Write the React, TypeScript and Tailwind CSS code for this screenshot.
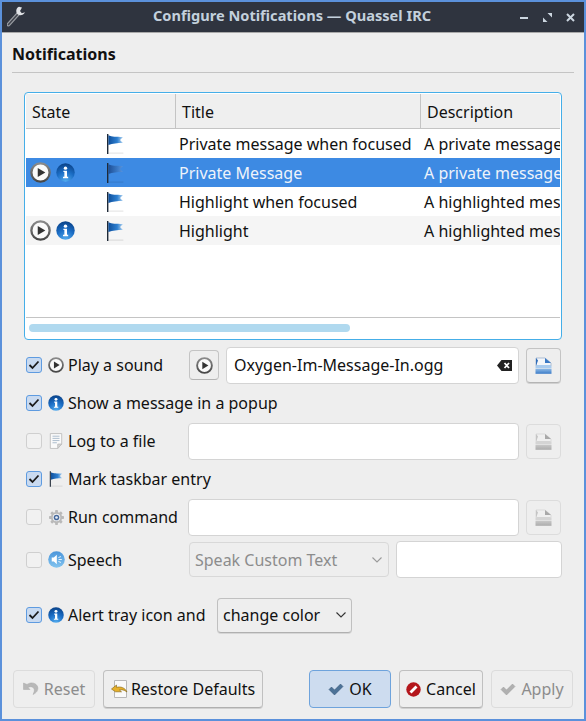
import { type ReactNode } from "react";

function PlayIcon({ size = 18, id }: { size?: number; id: string }) {
  return (
    <svg width={size} height={size} viewBox="0 0 20 20" className="shrink-0">
      <defs>
        <linearGradient id={id} x1="0" y1="0" x2="0" y2="1">
          <stop offset="0" stopColor="#8a8a8a" />
          <stop offset="1" stopColor="#474747" />
        </linearGradient>
      </defs>
      <circle cx="10" cy="10" r="8.7" fill="#fafafa" stroke={`url(#${id})`} strokeWidth="2.2" />
      <path d="M7.4 5.6 14.6 10 7.4 14.4Z" fill="#333" />
    </svg>
  );
}

function InfoIcon({ size = 16, id }: { size?: number; id: string }) {
  return (
    <svg width={size} height={size} viewBox="0 0 20 20" className="shrink-0">
      <defs>
        <radialGradient id={id} cx="0.5" cy="1" r="1">
          <stop offset="0" stopColor="#55aef0" />
          <stop offset="0.55" stopColor="#1a6cc4" />
          <stop offset="1" stopColor="#0a4288" />
        </radialGradient>
      </defs>
      <circle cx="10" cy="10" r="9.7" fill={`url(#${id})`} />
      <circle cx="10" cy="5.4" r="1.8" fill="#fff" />
      <path d="M7.8 8.2h3.8v6.4h1.2V16H7.4v-1.4h1.4V9.6h-1Z" fill="#fff" />
    </svg>
  );
}

function FlagIcon({ id, faded = false, w = 18, h = 20 }: { id: string; faded?: boolean; w?: number; h?: number }) {
  return (
    <svg width={w} height={h} viewBox="0 0 18 20" className="shrink-0">
      <defs>
        <linearGradient id={id} x1="0" y1="0" x2="1" y2="0">
          <stop offset="0" stopColor={faded ? "#1d4f96" : "#0e4f9c"} />
          <stop offset="0.6" stopColor={faded ? "#3a78c4" : "#2d7fd0"} />
          <stop offset="1" stopColor={faded ? "#5a94dc" : "#b9d8f2"} />
        </linearGradient>
      </defs>
      <rect x="1" y="0" width="1.4" height="20" fill="#1f2a38" />
      <path d="M2.4 1.2C6 3 10 2.6 17 3l-3 3 3 3c-6 0-10 .6-14.6 2Z" fill={`url(#${id})`} />
      <rect x="2.4" y="18.6" width="15" height="1" fill="#000" opacity="0.12" />
    </svg>
  );
}

function FileIcon() {
  return (
    <svg width="14" height="16" viewBox="0 0 16 18" className="shrink-0">
      <path d="M1.5.5h13v12l-4.5 5H1.5Z" fill="#fafafa" stroke="#bdbdbd" />
      <path d="M10 17.5v-5h4.5Z" fill="#d5d5d5" stroke="#bdbdbd" />
      <path d="M4 3.5h8M4 6h8M4 8.5h8M4 11h5" stroke="#a3b6c8" />
    </svg>
  );
}

function GearIcon() {
  return (
    <svg width="15" height="15" viewBox="0 0 16 16" className="shrink-0">
      <g fill="#b9b9b9">
        <circle cx="8" cy="8" r="6" />
        <rect x="6.5" y="0" width="3" height="16" rx="0.8" />
        <rect x="0" y="6.5" width="16" height="3" rx="0.8" />
        <rect x="6.5" y="0" width="3" height="16" rx="0.8" transform="rotate(45 8 8)" />
        <rect x="6.5" y="0" width="3" height="16" rx="0.8" transform="rotate(-45 8 8)" />
      </g>
      <circle cx="8" cy="8" r="4" fill="#f4f4f4" />
      <circle cx="8" cy="8" r="3" fill="#46699c" />
      <circle cx="8" cy="8" r="1.4" fill="#e8eef6" />
    </svg>
  );
}

function SpeechIcon() {
  return (
    <svg width="17" height="17" viewBox="0 0 16 16" className="shrink-0">
      <defs>
        <linearGradient id="speechFill" x1="0" y1="0" x2="0" y2="1">
          <stop offset="0" stopColor="#4a95da" />
          <stop offset="1" stopColor="#83c4ef" />
        </linearGradient>
      </defs>
      <circle cx="8" cy="8" r="7.8" fill="url(#speechFill)" />
      <path d="M3.5 6.2h2l2.8-2.6v8.8L5.500 9.800h-2Z" fill="#fff" />
      <path d="M9.8 6.2l2.4-1M10 8h3M9.8 9.8l2.4 1" stroke="#fff" strokeWidth="0.8" />
    </svg>
  );
}

function OpenIcon({ id, disabled = false }: { id: string; disabled?: boolean }) {
  return (
    <svg width="17" height="17" viewBox="0 0 17 17">
      <defs>
        <linearGradient id={id} x1="0" y1="0" x2="0" y2="1">
          <stop offset="0" stopColor={disabled ? "#c8c8c8" : "#8db9e6"} />
          <stop offset="1" stopColor={disabled ? "#acacac" : "#3c7cc8"} />
        </linearGradient>
      </defs>
      <path d="M1 9V1h9l6 5v3Z" fill={disabled ? "#efefef" : "#f4f6f9"} stroke={disabled ? "#cfcfcf" : "#7d9cc0"} strokeWidth="0.6" />
      <path d="M10 1v5h6Z" fill={disabled ? "#a8a8a8" : "#3a78c4"} />
      <path d="M3 3.5 1 1v8Z" fill={disabled ? "#c4c4c4" : "#2f6cb8"} />
      <path d="M.5 9.5 2 8h13l1.500 1.500v1.800H.5Z" fill={disabled ? "#d4d4d4" : "#a9cbee"} />
      <rect x="0.5" y="11.8" width="16" height="5" fill={`url(#${id})`} />
    </svg>
  );
}

function CheckMark({ color = "#4c7297", edge = "#2f4f70" }: { color?: string; edge?: string }) {
  return (
    <svg width="16" height="13" viewBox="0 0 16 13" className="shrink-0">
      <path d="M1 6.5 3.5 4 6.5 7 12.5 1 15 3.5 6.5 12Z" fill={color} stroke={edge} strokeWidth="0.5" />
    </svg>
  );
}

function Checkbox({ checked }: { checked: boolean }) {
  return (
    <span
      className={`flex h-4 w-4 shrink-0 items-center justify-center rounded-[3px] border ${
        checked ? "border-[#5e9be0] bg-[#c9daf0]" : "border-[#cfcfcf] bg-[#f1f1f1]"
      }`}
    >
      {checked && (
        <svg width="12" height="10" viewBox="0 0 12 10">
          <path d="M1.5 5 4.5 8 10.5 1.5" fill="none" stroke="#1c1c1c" strokeWidth="1.8" />
        </svg>
      )}
    </span>
  );
}

function Option({ checked, icon, label, width }: { checked: boolean; icon: ReactNode; label: string; width: string }) {
  return (
    <div className={`flex shrink-0 items-center ${width}`}>
      <Checkbox checked={checked} />
      <span className="ml-[6px] flex w-[16px] shrink-0 justify-center">{icon}</span>
      <span className="ml-[4px] whitespace-nowrap">{label}</span>
    </div>
  );
}

function TextBox({ className, children }: { className: string; children?: ReactNode }) {
  return (
    <div className={`flex items-center rounded-[4px] border border-[#d4d4d4] bg-white ${className}`}>{children}</div>
  );
}

function OpenButton({ id, disabled = false }: { id: string; disabled?: boolean }) {
  return (
    <div
      className={`ml-[7px] flex h-[35px] w-[35px] shrink-0 items-center justify-center rounded-[4px] border ${
        disabled ? "border-[#dcdcdc]" : "border-[#c4c4c4] border-b-[#b4b4b4] shadow-[0_1px_0_#d0d0d0]"
      }`}
    >
      <OpenIcon id={id} disabled={disabled} />
    </div>
  );
}

function Chevron({ color }: { color: string }) {
  return (
    <svg width="10" height="6" viewBox="0 0 10 6">
      <path d="M.5.5 5 5 9.5.5" fill="none" stroke={color} strokeWidth="1.1" />
    </svg>
  );
}

function UndoIcon() {
  return (
    <svg width="16" height="14" viewBox="0 0 16 14" className="shrink-0">
      <path d="M.5 1v6.5H7L5 5.500c2.500-1.500 5.500-.8 6.200 1.800.3 1.500 0 3-1.200 5.200 3.500-1.500 5.500-4.500 4.700-7.500C13.500 1 8 -.5 4 2.500Z" fill="#b8b8b8" stroke="#a8a8a8" strokeWidth="0.5" />
    </svg>
  );
}

function RestoreIcon() {
  return (
    <svg width="17" height="19" viewBox="0 0 17 19" className="shrink-0">
      <path d="M3.5.5h12v17h-12Z" fill="#fafafa" stroke="#b8b8b8" />
      <path d="M.5 9 5.500 5v2.400c4-1.200 8.500.2 10.500 4.600-3-2.200-5.500-2.600-7.500-2l2 1.800H4.500Z" fill="#e6b02a" stroke="#7f6210" strokeWidth="0.6" />
    </svg>
  );
}

function CancelIcon() {
  return (
    <svg width="15" height="15" viewBox="0 0 15 15" className="shrink-0">
      <circle cx="7.5" cy="7.5" r="7.2" fill="#b4161b" />
      <path d="M3.5 9.500 9.500 3.500 11.500 5.500 5.500 11.500Z" fill="#fff" />
    </svg>
  );
}

function FooterButton({ className, children }: { className: string; children: ReactNode }) {
  return (
    <div className={`flex h-[38px] shrink-0 items-center justify-center rounded-[4px] border ${className}`}>
      {children}
    </div>
  );
}

const rows = [
  { title: "Private message when focused", desc: "A private message", icons: false, sel: false, alt: false },
  { title: "Private Message", desc: "A private message", icons: true, sel: true, alt: false },
  { title: "Highlight when focused", desc: "A highlighted message", icons: false, sel: false, alt: false },
  { title: "Highlight", desc: "A highlighted message", icons: true, sel: false, alt: true },
];

export default function App() {
  return (
    <div
      className="flex h-[721px] w-[586px] flex-col overflow-hidden border-2 border-[#5b91db] bg-[#eeeeee] text-[16px] text-[#111]"
      style={{ fontFamily: '"Noto Sans", sans-serif' }}
    >
      {/* title bar */}
      <div className="flex h-[31px] shrink-0 items-center border-b border-[#a9a9a9] bg-[#2f343f]">
        <svg width="20" height="22" viewBox="0 0 20 22" className="ml-[5px]">
          <path d="M1.5 18.5 11 8" stroke="#9a9da3" strokeWidth="4" strokeLinecap="round" />
          <path d="M1.5 18.5 11 8" stroke="#40444d" strokeWidth="1.5" strokeLinecap="round" />
          <path d="M12 .8c-3 1.200-3.500 5-1.500 7.500 2.500 1.800 6 1 7.500-2l-3.200 1-1.800-2.300 2-3.600Z" fill="#e0e2e6" />
        </svg>
        <div className="mb-[2px] flex-1 pl-[126px] text-[14.6px] font-bold whitespace-nowrap text-[#c3d0dc]">
          Configure Notifications — Quassel IRC
        </div>
        <div className="mr-[9px] flex items-center gap-[14px]">
          <svg width="9" height="9" viewBox="0 0 9 9"><rect x="0" y="4" width="8" height="2" fill="#ccd6e0" /></svg>
          <svg width="9" height="9" viewBox="0 0 9 9"><path d="M4.5 0H9v4.500ZM0 4.500V9h4.500Z" fill="#ccd6e0" /></svg>
          <svg width="9" height="9" viewBox="0 0 9 9"><path d="M1 1 8 8M8 1 1 8" stroke="#ccd6e0" strokeWidth="2" /></svg>
        </div>
      </div>

      <div className="flex flex-1 flex-col px-[10px]">
        <div className="mt-[11px] h-[29px] border-b border-[#c4c4c4] leading-[20px] font-bold">Notifications</div>

        {/* notification table */}
        <div className="mt-[19px] mx-[12px] h-[248px] overflow-hidden rounded-[4px] border border-[#45aee8] bg-white p-px">
          <div className="flex h-[35px] border-b border-[#c4c4c4] bg-[#efefef]">
            <div className="w-[150px] border-r border-[#c4c4c4] pl-[6px] leading-[36px]">State</div>
            <div className="w-[245px] border-r border-[#c4c4c4] pl-[6px] leading-[36px]">Title</div>
            <div className="flex-1 pl-[6px] leading-[36px]">Description</div>
          </div>
          {rows.map((r, i) => (
            <div
              key={r.title}
              className={`flex h-[29px] items-center whitespace-nowrap ${
                r.sel ? "bg-[#3d8ae3] text-[#eef3fa]" : r.alt ? "bg-[#f5f5f5]" : "bg-white"
              }`}
            >
              <div className="flex w-[151px] shrink-0 items-center">
                <span className="ml-[4px] flex w-[46px] items-center gap-[5px]">
                  {r.icons && <PlayIcon size={21} id={`rowPlay${i}`} />}
                  {r.icons && <InfoIcon size={19} id={`rowInfo${i}`} />}
                </span>
                <span className="ml-[30px]">
                  <FlagIcon id={`rowFlag${i}`} faded={r.sel} />
                </span>
              </div>
              <div className="w-[245px] shrink-0 overflow-hidden pl-[2px]">{r.title}</div>
              <div className="flex-1 overflow-hidden pl-[2px]">{r.desc}</div>
            </div>
          ))}
          <div className="h-[73px] border-b border-[#c4c4c4] bg-white" />
          <div className="px-[3px] pt-[6px]">
            <div className="h-[8px] w-[321px] rounded-full bg-[#b0d9ef]" />
          </div>
        </div>

        {/* options */}
        <div className="ml-[14px] mr-[11px] mt-[6px] flex h-[38px] items-center">
          <Option checked icon={<PlayIcon size={16} id="soundPlay" />} label="Play a sound" width="w-[163px]" />
          <div className="flex h-[30px] w-[30px] items-center justify-center rounded-[4px] border border-[#c4c4c4] border-b-[#b4b4b4]">
            <PlayIcon size={17} id="soundPreview" />
          </div>
          <TextBox className="ml-[7px] h-[37px] w-[293px] shrink-0 justify-between pl-[7px] pr-[6px]">
            <span>Oxygen-Im-Message-In.ogg</span>
            <svg width="15" height="11" viewBox="0 0 15 11">
              <path d="M4.5 0H15v11H4.500L0 5.500Z" fill="#222" />
              <path d="M7.5 3 12 8M12 3 7.500 8" stroke="#fff" strokeWidth="1.8" />
            </svg>
          </TextBox>
          <OpenButton id="openSound" />
        </div>

        <div className="ml-[14px] flex h-[38px] items-center">
          <Option checked icon={<InfoIcon id="popupInfo" />} label="Show a message in a popup" width="w-full" />
        </div>

        <div className="ml-[14px] mr-[11px] flex h-[38px] items-center">
          <Option checked={false} icon={<FileIcon />} label="Log to a file" width="w-[162px]" />
          <TextBox className="h-[37px] w-[331px] shrink-0" />
          <OpenButton id="openLog" disabled />
        </div>

        <div className="ml-[14px] flex h-[38px] items-center">
          <Option checked icon={<FlagIcon id="taskFlag" w={14} h={16} />} label="Mark taskbar entry" width="w-full" />
        </div>

        <div className="ml-[14px] mr-[11px] flex h-[38px] items-center">
          <Option checked={false} icon={<GearIcon />} label="Run command" width="w-[162px]" />
          <TextBox className="h-[37px] w-[331px] shrink-0" />
          <OpenButton id="openRun" disabled />
        </div>

        <div className="ml-[14px] mt-[5px] flex h-[37px] items-center">
          <Option checked={false} icon={<SpeechIcon />} label="Speech" width="w-[163px]" />
          <div className="flex h-[35px] w-[200px] shrink-0 items-center justify-between rounded-[4px] border border-[#d8d8d8] pl-[5px] pr-[6px] text-[#8c8c8c]">
            <span>Speak Custom Text</span>
            <Chevron color="#9a9a9a" />
          </div>
          <TextBox className="ml-[7px] h-[37px] w-[166px] shrink-0" />
        </div>

        <div className="ml-[14px] mt-[19px] flex h-[36px] items-center">
          <Option checked icon={<InfoIcon id="trayInfo" />} label="Alert tray icon and" width="w-[191px]" />
          <div className="flex h-[35px] w-[135px] shrink-0 items-center justify-between rounded-[4px] border border-[#c0c0c0] border-b-[#b0b0b0] px-[5px] shadow-[0_1px_0_#d6d6d6]">
            <span>change color</span>
            <Chevron color="#333" />
          </div>
        </div>

        {/* footer buttons */}
        <div className="mt-[37px] ml-px flex items-center">
          <FooterButton className="w-[82px] gap-[5px] border-[#dcdcdc] text-[#8c8c8c]">
            <UndoIcon />
            <span>Reset</span>
          </FooterButton>
          <FooterButton className="ml-[8px] w-[160px] gap-[3px] border-[#c0c0c0] border-b-[#b0b0b0] shadow-[0_1px_0_#d0d0d0]">
            <RestoreIcon />
            <span>Restore Defaults</span>
          </FooterButton>
          <FooterButton className="ml-[46px] w-[82px] gap-[5px] border-[#6ea3dc] bg-[#cddcef]">
            <CheckMark />
            <span>OK</span>
          </FooterButton>
          <FooterButton className="ml-[8px] w-[84px] gap-[5px] border-[#c0c0c0] border-b-[#b0b0b0] shadow-[0_1px_0_#d0d0d0]">
            <CancelIcon />
            <span>Cancel</span>
          </FooterButton>
          <FooterButton className="ml-[8px] w-[82px] gap-[5px] border-[#dcdcdc] text-[#8c8c8c]">
            <CheckMark color="#b0b0b0" edge="#9a9a9a" />
            <span>Apply</span>
          </FooterButton>
        </div>
      </div>
    </div>
  );
}
